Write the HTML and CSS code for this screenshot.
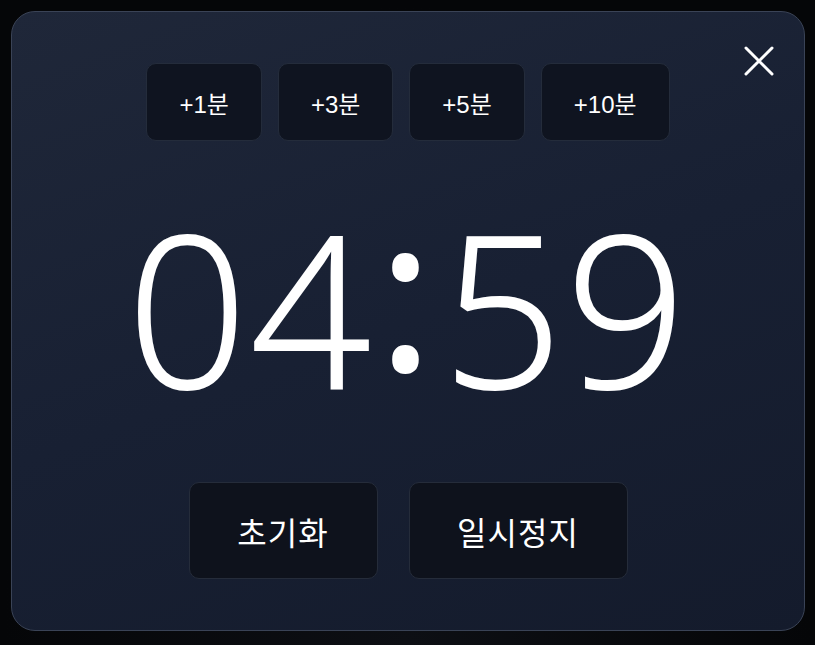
FILE: index.html
```html
<!DOCTYPE html>
<html lang="ko">
<head>
<meta charset="utf-8">
<link rel="stylesheet" href="styles.css">
</head>
<body>
<div class="backdrop">
  <div class="modal">
    <button class="close" aria-label="닫기">
      <svg viewBox="0 0 30 30" width="30" height="30"><path d="M2 2 L28 28 M28 2 L2 28" stroke="#fff" stroke-width="3" stroke-linecap="round"/></svg>
    </button>
    <div class="presets">
      <button class="preset">+1분</button>
      <button class="preset">+3분</button>
      <button class="preset">+5분</button>
      <button class="preset">+10분</button>
    </div>
    <div class="display"><span class="time">04<span class="colon">:</span>59</span></div>
    <div class="actions">
      <button class="action reset">초기화</button>
      <button class="action pause">일시정지</button>
    </div>
  </div>
</div>
</body>
</html>
```
FILE: styles.css
```css
html, body {
  margin: 0;
  padding: 0;
  background: #060709;
}
.backdrop {
  width: 815px;
  height: 645px;
  padding: 11px;
  box-sizing: border-box;
  background: radial-gradient(ellipse at 50% 100%, #0d0f14 0%, #050608 70%);
}
.modal {
  position: relative;
  width: 794px;
  height: 620px;
  box-sizing: border-box;
  border: 1px solid #3a4356;
  border-radius: 24px;
  background: linear-gradient(160deg, #1f2739 0%, #182033 50%, #141b2c 100%);
  padding: 51px 0 51px;
  display: flex;
  flex-direction: column;
  align-items: center;
}
button {
  font: inherit;
  color: #fff;
  cursor: pointer;
}
.close {
  position: absolute;
  top: 34px;
  right: 30px;
  width: 30px;
  height: 30px;
  padding: 0;
  border: 0;
  background: transparent;
  display: flex;
}
.presets {
  display: flex;
  gap: 16px;
}
.preset {
  height: 78px;
  min-width: 114px;
  padding: 0 32px;
  box-sizing: border-box;
  background: #0f1420;
  border: 1px solid #242c3b;
  border-radius: 10px;
  font-family: "Liberation Sans", "Noto Sans CJK KR", sans-serif;
  font-size: 24px;
}
.display {
  flex: 1;
  display: flex;
  align-items: center;
  justify-content: center;
  color: #fff;
  font-family: "Open Sans", sans-serif;
  font-weight: 300;
  font-size: 211px;
  letter-spacing: 3px;
  line-height: 1;
  padding-bottom: 28px;
  -webkit-text-stroke: 2px #fff;
}
.time {
  display: block;
  white-space: nowrap;
}
.colon {
  display: inline-block;
  margin: 0 6px 0 4px;
  font-weight: 400;
  vertical-align: 18px;
}
.actions {
  display: flex;
  gap: 31px;
}
.action {
  height: 97px;
  padding: 0 40px;
  box-sizing: border-box;
  background: #0e121c;
  border: 1px solid #252c3a;
  border-radius: 10px;
  font-family: "Noto Sans CJK KR", sans-serif;
  font-size: 32px;
  letter-spacing: 1px;
}
.reset { width: 189px; }
.pause { width: 219px; }
```
